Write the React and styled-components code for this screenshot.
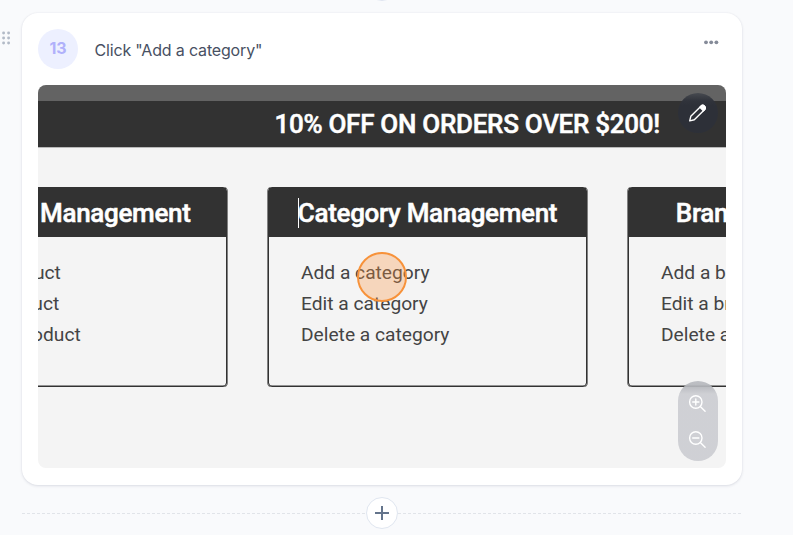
import React from "react";
import styled, { createGlobalStyle } from "styled-components";

const GlobalStyle = createGlobalStyle`
  * { box-sizing: border-box; }
  body {
    margin: 0;
    background: #f9fafc;
    font-family: Inter, "Liberation Sans", sans-serif;
    overflow: hidden;
  }
`;

const Page = styled.main`
  position: relative;
  display: flex;
  flex-direction: column;
  width: 793px;
  height: 535px;
  padding-top: 13px;
  overflow: hidden;
`;

const PreviousAdd = styled.div`
  position: absolute;
  top: -31px;
  left: 366px;
  width: 32px;
  height: 32px;
  border: 1px solid #dfe4f0;
  border-radius: 50%;
  background: #fff;
`;

const StepRow = styled.div`
  display: flex;
  align-items: flex-start;
`;

const Handle = styled.div`
  display: flex;
  width: 22px;
  padding: 18px 0 0 2px;
`;

const Card = styled.section`
  width: 720px;
  height: 472px;
  padding: 16px;
  border-radius: 16px;
  background: #fff;
  box-shadow: 0 1px 3px rgba(30, 41, 80, 0.13), 0 0 2px rgba(30, 41, 80, 0.05);
`;

const CardHeader = styled.header`
  display: flex;
  align-items: flex-start;
  height: 56px;
`;

const StepNumber = styled.div`
  width: 40px;
  height: 40px;
  border-radius: 50%;
  background: #edf0ff;
  color: #b0b1fb;
  font-size: 16px;
  font-weight: 700;
  line-height: 39px;
  text-align: center;
`;

const StepTitle = styled.h2`
  flex: 1;
  margin: 9px 0 0 16.5px;
  color: #475062;
  font-size: 16px;
  font-weight: 400;
  line-height: 24px;
  letter-spacing: -0.17px;
  white-space: nowrap;
`;

const MenuButton = styled.button`
  display: flex;
  margin: 11px 7px 0 0;
  padding: 0;
  border: 0;
  background: none;
`;

const Screenshot = styled.div`
  position: relative;
  height: 383px;
  border-radius: 8px;
  background: #f4f4f4;
  font-family: Roboto, sans-serif;
  overflow: hidden;
`;

const TopStrip = styled.div`
  height: 16px;
  background: #636363;
`;

const Banner = styled.div`
  height: 47px;
  padding-left: 236.5px;
  border-bottom: 1px solid #b9b9b9;
  background: #323232;
  color: #fff;
  font-size: 26px;
  font-weight: 500;
  line-height: 46px;
  letter-spacing: -0.29px;
  -webkit-text-stroke: 0.5px #fff;
  white-space: nowrap;
`;

const Panels = styled.div`
  display: flex;
  gap: 41px;
  margin: 39px 0 0 -130px;
`;

const Panel = styled.article`
  flex: 0 0 319px;
  width: 319px;
  height: 200px;
  border: 1px solid #323232;
  border-radius: 4px;
  box-shadow: 0.6px 0 0 #323232, -0.6px 0 0 #323232, inset 0 -0.6px 0 #323232;
`;

const PanelTitle = styled.h3`
  margin: 0;
  height: 49px;
  background: #323232;
  color: #fff;
  font-size: 26px;
  font-weight: 500;
  line-height: 50px;
  letter-spacing: -0.31px;
  -webkit-text-stroke: 0.5px #fff;
  text-align: center;
  white-space: nowrap;
`;

const Caret = styled.span`
  display: inline-block;
  width: 1px;
  height: 30px;
  margin-right: -1px;
  background: #fff;
  vertical-align: -6px;
`;

const Links = styled.ul`
  margin: 20px 0 0;
  padding: 0 0 0 32px;
  color: #444;
  font-size: 19.2px;
  line-height: 31.2px;
  list-style: none;
  white-space: nowrap;
`;

const ClickMarker = styled.div`
  position: absolute;
  top: 167px;
  left: 319px;
  width: 50px;
  height: 50px;
  border: 2px solid #f7923a;
  border-radius: 50%;
  background: rgba(251, 146, 60, 0.3);
`;

const EditButton = styled.button`
  position: absolute;
  top: 8px;
  right: 8px;
  display: grid;
  place-items: center;
  width: 40px;
  height: 40px;
  padding: 0;
  border: 0;
  border-radius: 50%;
  background: linear-gradient(#474a50 0, #30333b 8px, #2d3038 13px);
`;

const ZoomControls = styled.div`
  position: absolute;
  right: 8px;
  bottom: 7px;
  display: flex;
  flex-direction: column;
  align-items: center;
  gap: 16px;
  width: 40px;
  height: 80px;
  padding-top: 13px;
  border-radius: 20px;
  background: linear-gradient(rgba(186, 188, 193, 0.92), rgba(180, 182, 187, 0.92) 5px, rgba(204, 205, 210, 0.92) 13px);
`;

const Divider = styled.div`
  display: flex;
  align-items: center;
  width: 720px;
  height: 32px;
  margin: 12px 0 0 22px;
`;

const Dashes = styled.div`
  flex: 1;
  height: 1px;
  background: repeating-linear-gradient(90deg, #e1e4e9 0 3px, transparent 3px 5px);
`;

const AddButton = styled.button`
  display: grid;
  place-items: center;
  width: 32px;
  height: 32px;
  padding: 0;
  border: 1px solid #e0e6f0;
  border-radius: 50%;
  background: #fff;
`;

const panels = [
  { title: "Product Management", links: ["Add a product", "Edit a product", "Delete a product"] },
  { title: "Category Management", links: ["Add a category", "Edit a category", "Delete a category"], caret: true },
  { title: "Brand Management", links: ["Add a brand", "Edit a brand", "Delete a brand"] },
];

function DragIcon() {
  return (
    <svg width="9" height="14" viewBox="0 0 9 14" fill="#b2bac7">
      {[2, 7, 12].map((y) => (
        <React.Fragment key={y}>
          <circle cx="1.6" cy={y} r="1.45" />
          <circle cx="6.6" cy={y} r="1.45" />
        </React.Fragment>
      ))}
    </svg>
  );
}

function MoreIcon() {
  return (
    <svg width="16" height="5" viewBox="0 0 16 5" fill="#858b99">
      <circle cx="3" cy="2.3" r="1.9" />
      <circle cx="8.2" cy="2.3" r="1.9" />
      <circle cx="13.4" cy="2.3" r="1.9" />
    </svg>
  );
}

function PencilIcon() {
  return (
    <svg width="18" height="18" viewBox="0 0 18 18" fill="none" stroke="#fff" strokeWidth="1.4" strokeLinejoin="round">
      <path d="M.7 16.9 1.8 12.3 12.2 1.9a2.1 2.1 0 0 1 3 0l.5.5a2.1 2.1 0 0 1 0 3L5.3 15.8Z" />
      <path d="m10.9 3.2 1.3-1.3a2.1 2.1 0 0 1 3 0l.5.5a2.1 2.1 0 0 1 0 3l-1.3 1.3Z" fill="#fff" />
    </svg>
  );
}

function Magnifier({ plus }) {
  return (
    <svg width="20" height="20" viewBox="0 0 20 20" fill="none" stroke="#fff" strokeWidth="1.4" strokeLinecap="round">
      <circle cx="7.8" cy="8" r="6.2" />
      <path d="m12.3 12.5 4.8 4.8M4.7 8h6.2" />
      {plus && <path d="M7.8 4.9v6.2" />}
    </svg>
  );
}

export default function App() {
  return (
    <Page>
      <GlobalStyle />
      <PreviousAdd />
      <StepRow>
        <Handle><DragIcon /></Handle>
        <Card>
          <CardHeader>
            <StepNumber>13</StepNumber>
            <StepTitle>Click "Add a category"</StepTitle>
            <MenuButton aria-label="More options"><MoreIcon /></MenuButton>
          </CardHeader>
          <Screenshot>
            <TopStrip />
            <Banner>10% OFF ON ORDERS OVER $200!</Banner>
            <Panels>
              {panels.map(({ title, links, caret }) => (
                <Panel key={title}>
                  <PanelTitle>{caret && <Caret />}{title}</PanelTitle>
                  <Links>{links.map((link) => <li key={link}>{link}</li>)}</Links>
                </Panel>
              ))}
            </Panels>
            <ClickMarker />
            <EditButton aria-label="Edit image"><PencilIcon /></EditButton>
            <ZoomControls><Magnifier plus /><Magnifier /></ZoomControls>
          </Screenshot>
        </Card>
      </StepRow>
      <Divider>
        <Dashes />
        <AddButton aria-label="Add step">
          <svg width="14" height="14" viewBox="0 0 14 14" stroke="#64748b" strokeWidth="2">
            <path d="M0 7h14M7 0v14" />
          </svg>
        </AddButton>
        <Dashes />
      </Divider>
    </Page>
  );
}
